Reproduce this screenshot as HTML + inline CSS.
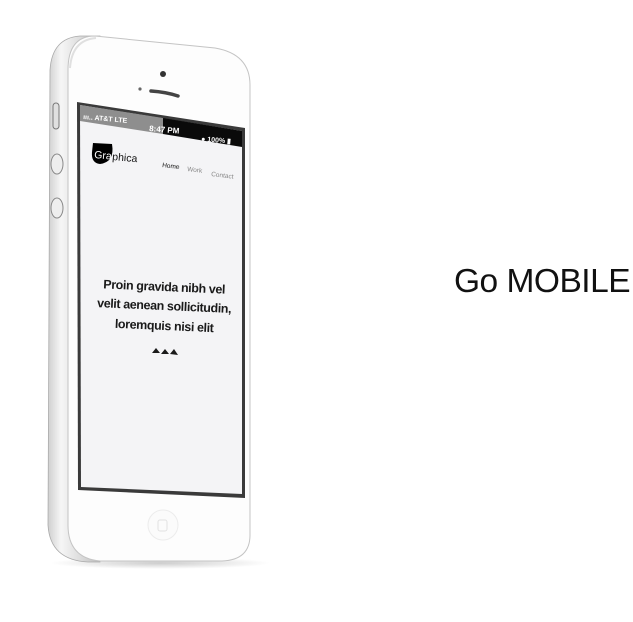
<!DOCTYPE html>
<html><head><meta charset="utf-8"><style>
html,body{margin:0;padding:0;background:#fff;width:633px;height:622px;overflow:hidden}
svg{position:absolute;left:0;top:0}
.go{position:absolute;left:454px;top:263px;font:33.5px "Liberation Sans",sans-serif;color:#111;letter-spacing:-0.5px;white-space:nowrap}
</style></head><body>
<svg width="633" height="622" viewBox="0 0 633 622">
<defs>
<linearGradient id="side" x1="0" x2="1" y1="0" y2="0">
<stop offset="0" stop-color="#cfcfcf"/><stop offset="0.25" stop-color="#f6f6f6"/><stop offset="0.6" stop-color="#dedede"/><stop offset="1" stop-color="#bdbdbd"/>
</linearGradient>
<radialGradient id="shadow" cx="0.5" cy="0.5" r="0.5"><stop offset="0" stop-color="#000" stop-opacity="0.2"/><stop offset="1" stop-color="#000" stop-opacity="0"/></radialGradient>
</defs>
<ellipse cx="160" cy="563" rx="110" ry="6" fill="url(#shadow)"/>
<path d="M80 36 Q52 38 50 70 L48 525 Q50 560 88 562 L100 562 L100 36 Z" fill="url(#side)" stroke="#aaa" stroke-width="0.8"/>
<path d="M95 36 L215 48 Q250 54 250 85 L250 535 Q250 560 222 561 L100 561 Q68 558 68 525 L68 70 Q68 36 95 36 Z" fill="#fdfdfd" stroke="#c4c4c4" stroke-width="1"/>
<path d="M70 68 Q72 40 96 38" fill="none" stroke="#e0e0e0" stroke-width="2"/>
<rect x="53" y="103" width="6" height="26" rx="3" fill="#e0e0e0" stroke="#777" stroke-width="1"/>
<ellipse cx="57" cy="164" rx="6" ry="10" fill="#eee" stroke="#888"/>
<ellipse cx="57" cy="208" rx="6" ry="10" fill="#eee" stroke="#888"/>
<circle cx="163" cy="74" r="3" fill="#333"/>
<circle cx="140" cy="89" r="1.6" fill="#666"/>
<path d="M151 91 Q166 92 178 96" stroke="#444" stroke-width="3.5" stroke-linecap="round" fill="none"/>
<polygon points="77,102 245,128 245,498 78,490" fill="#3a3a3a"/>
<polygon points="80,105 242,131 242,494 81,487" fill="#f4f4f6"/>
<polygon points="80,105 163,118 163,134 80,121" fill="#8e8e8e"/>
<polygon points="163,118 242,131 242,147 163,134" fill="#0a0a0a"/>
<g font-family="Liberation Sans,sans-serif" font-weight="bold" font-size="7" fill="#fff">
<text x="83" y="119" transform="rotate(5 83 119)">ııı.. AT&amp;T   LTE</text>
<text x="149" y="131" transform="rotate(5 149 131)" font-size="8">8:47 PM</text>
<text x="201" y="141" transform="rotate(5 201 141)">● 100% ▮</text>
</g>
<path d="M93 143 L112 144 Q115 162 100 164 Q91 163 92 152 Z" fill="#000"/>
<g font-family="Liberation Sans,sans-serif" font-size="10.5">
<text x="94" y="158" fill="#fff" transform="rotate(5 94 158)">Gra</text>
<text x="112" y="160" fill="#111" transform="rotate(5 112 160)">phica</text>
<text x="162" y="167" fill="#111" font-size="6.5" transform="rotate(7 162 167)">Home</text>
<text x="187" y="171" fill="#888" font-size="6.5" transform="rotate(7 187 171)">Work</text>
<text x="211" y="176" fill="#888" font-size="6.5" transform="rotate(7 211 176)">Contact</text>
</g>
<g font-family="Liberation Sans,sans-serif" font-weight="bold" font-size="12.5" fill="#1a1a1a" text-anchor="middle" letter-spacing="-0.4">
<text x="164" y="291" transform="rotate(2.5 164 291)">Proin gravida nibh vel</text>
<text x="164" y="310" transform="rotate(2.5 164 310)">velit aenean sollicitudin,</text>
<text x="164" y="330" transform="rotate(2.5 164 330)">loremquis nisi elit</text>
</g>
<g fill="#1a1a1a">
<polygon points="152,353 156,348 160,353"/><polygon points="161,354 165,349 169,354"/><polygon points="170,354 174,349 178,355"/>
</g>
<circle cx="163" cy="525" r="15" fill="#fbfbfb" stroke="#ececec"/>
<rect x="158" y="520" width="9" height="11" rx="2" fill="none" stroke="#e2e2e2"/>
</svg>
<div class="go">Go MOBILE</div>
</body></html>
